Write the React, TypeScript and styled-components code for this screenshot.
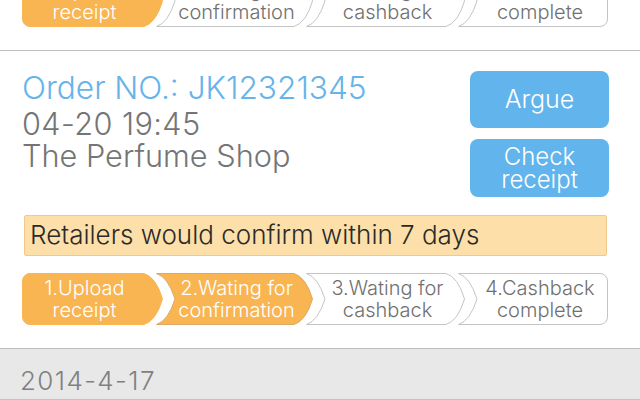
import React, { useLayoutEffect, useRef } from "react";
import styled, { createGlobalStyle } from "styled-components";

const GlobalStyle = createGlobalStyle`
  html, body { margin: 0; padding: 0; height: 100%; background: #fff; }
  #root { height: 100%; }
  * { box-sizing: border-box; }
`;

const FONT = `Inter, Roboto, "Liberation Sans", Arial, sans-serif`;

const Screen = styled.div`
  position: relative;
  width: 640px;
  height: 400px;
  overflow-y: auto;
  scrollbar-width: none;
  &::-webkit-scrollbar { display: none; }
  font-family: ${FONT};
  font-weight: 300;
  background: #fff;
`;

const DateHeader = styled.div`
  height: 51px;
  display: flex;
  align-items: flex-end;
  padding: 0 0 5px 20px;
  background: #e8e8e8;
  border-bottom: 1px solid #c2c2c2;
  color: #808080;
  font-size: 26px;
  line-height: 26px;
  letter-spacing: 1.4px;
`;

const Card = styled.div`
  display: flex;
  flex-direction: column;
  padding: 20px 31px 23px 22px;
  border-bottom: 1px solid #bdbdbd;
`;

const InfoRow = styled.div`
  display: flex;
  justify-content: space-between;
  align-items: flex-start;
  height: 126px;
`;

const InfoText = styled.div`
  display: flex;
  flex-direction: column;
  margin-top: -1px;
`;

const Line = styled.div<{ $size: number; $lh: number; $blue?: boolean; $ls?: number }>`
  font-size: ${(p) => p.$size}px;
  line-height: ${(p) => p.$lh}px;
  letter-spacing: ${(p) => p.$ls ?? 0}px;
  color: ${(p) => (p.$blue ? "#66b4ea" : "#757575")};
  white-space: nowrap;
`;

const Actions = styled.div`
  display: flex;
  flex-direction: column;
  gap: 11px;
  width: 139px;
`;

const ActionButton = styled.button<{ $h: number; $size: number }>`
  height: ${(p) => p.$h}px;
  border: none;
  border-radius: 8px;
  background: #61b4ec;
  color: #fff;
  font-family: ${FONT};
  font-weight: 300;
  font-size: ${(p) => p.$size}px;
  line-height: 23px;
  padding: 0;
  display: flex;
  flex-direction: column;
  align-items: center;
  justify-content: center;
`;

const Notice = styled.div`
  margin: 18px 2px 0 2px;
  height: 41px;
  display: flex;
  align-items: center;
  padding: 0 5px 3px 5px;
  background: #fde0a9;
  border: 1px solid #f2c98d;
  border-radius: 2px;
  color: #2a2a2a;
  font-size: 26px;
  white-space: nowrap;
`;

const StepRow = styled.div`
  display: flex;
  height: 52px;
  margin-top: 17px;
`;

const StepBox = styled.div<{ $w: number; $first: boolean; $last: boolean; $active: boolean }>`
  position: relative;
  flex: 0 0 ${(p) => p.$w}px;
  height: 52px;
  margin-left: ${(p) => (p.$first ? 0 : -7)}px;
  padding-left: ${(p) => (p.$first ? 0 : 14)}px;
  padding-right: ${(p) => (p.$first ? 16 : p.$last ? 0 : 10)}px;
  display: flex;
  flex-direction: column;
  align-items: center;
  justify-content: center;
  font-size: 20px;
  line-height: 22px;
  color: ${(p) => (p.$active ? "#fff" : "#707070")};
  white-space: nowrap;
`;

const StepShape = styled.svg`
  position: absolute;
  left: 0;
  top: 0;
  overflow: visible;
`;

const StepLabel = styled.span`
  position: relative;
`;

const H = 52;
const A = 19;
const R = 8;

function stepPath(w: number, first: boolean, last: boolean) {
  const m = H / 2;
  let d = first ? `M ${R} 0.5` : `M 0.5 0.5`;
  if (last) {
    d += ` L ${w - R} 0.5 A ${R - 0.5} ${R - 0.5} 0 0 1 ${w - 0.5} ${R}`;
    d += ` L ${w - 0.5} ${H - R} A ${R - 0.5} ${R - 0.5} 0 0 1 ${w - R} ${H - 0.5}`;
  } else {
    d += ` L ${w - A} 0.5 Q ${w - A + 12} 4 ${w - 0.5} ${m} Q ${w - A + 12} ${H - 4} ${w - A} ${H - 0.5}`;
  }
  if (first) {
    d += ` L ${R} ${H - 0.5} A ${R - 0.5} ${R - 0.5} 0 0 1 0.5 ${H - R} L 0.5 ${R} A ${R - 0.5} ${R - 0.5} 0 0 1 ${R} 0.5 Z`;
  } else {
    d += ` L 0.5 ${H - 0.5} Q 12 ${H - 4} ${A} ${m} Q 12 4 0.5 0.5 Z`;
  }
  return d;
}

const STEPS = [
  { lines: ["1.Upload", "receipt"], w: 141 },
  { lines: ["2.Wating for", "confirmation"], w: 157 },
  { lines: ["3.Wating for", "cashback"], w: 159 },
  { lines: ["4.Cashback", "complete"], w: 150 },
];

function Steps({ stage }: { stage: number }) {
  return (
    <StepRow>
      {STEPS.map((s, i) => {
        const first = i === 0;
        const last = i === STEPS.length - 1;
        const active = i < stage;
        return (
          <StepBox key={i} $w={s.w} $first={first} $last={last} $active={active}>
            <StepShape width={s.w} height={H} viewBox={`0 0 ${s.w} ${H}`}>
              <path
                d={stepPath(s.w, first, last)}
                fill={active ? "#f8b552" : "#fff"}
                stroke={active ? (first ? "#f8b552" : "#d9ab66") : "#c4c4c4"}
                strokeWidth={1}
              />
            </StepShape>
            <StepLabel>{s.lines[0]}</StepLabel>
            <StepLabel>{s.lines[1]}</StepLabel>
          </StepBox>
        );
      })}
    </StepRow>
  );
}

type Order = {
  no: string;
  time: string;
  shop: string;
  notice: string;
  stage: number;
};

const OrderCard = React.forwardRef<HTMLDivElement, { order: Order }>(({ order }, ref) => (
  <Card ref={ref}>
    <InfoRow>
      <InfoText>
        <Line $size={31.6} $lh={36} $blue>
          Order NO.: {order.no}
        </Line>
        <Line $size={30.7} $lh={36} $ls={0.4}>{order.time}</Line>
        <Line $size={30.7} $lh={27}>{order.shop}</Line>
      </InfoText>
      <Actions>
        <ActionButton $h={57} $size={25}>Argue</ActionButton>
        <ActionButton $h={58} $size={24}>
          <span>Check</span>
          <span>receipt</span>
        </ActionButton>
      </Actions>
    </InfoRow>
    <Notice>{order.notice}</Notice>
    <Steps stage={order.stage} />
  </Card>
));

const ORDERS: Order[] = [
  { no: "JK12321346", time: "04-20 21:10", shop: "The Perfume Shop", notice: "Please upload your receipt", stage: 1 },
  { no: "JK12321345", time: "04-20 19:45", shop: "The Perfume Shop", notice: "Retailers would confirm within 7 days", stage: 2 },
  { no: "JK12321298", time: "04-17 15:20", shop: "The Perfume Shop", notice: "Cashback is on its way", stage: 3 },
];

export default function App() {
  const screenRef = useRef<HTMLDivElement>(null);
  const focusRef = useRef<HTMLDivElement>(null);

  useLayoutEffect(() => {
    if (screenRef.current && focusRef.current) {
      screenRef.current.scrollTop = focusRef.current.offsetTop - 51;
    }
  }, []);

  return (
    <>
      <GlobalStyle />
      <Screen ref={screenRef}>
        <DateHeader>2014-4-20</DateHeader>
        <OrderCard order={ORDERS[0]} />
        <OrderCard order={ORDERS[1]} ref={focusRef} />
        <DateHeader>2014-4-17</DateHeader>
        <OrderCard order={ORDERS[2]} />
      </Screen>
    </>
  );
}
